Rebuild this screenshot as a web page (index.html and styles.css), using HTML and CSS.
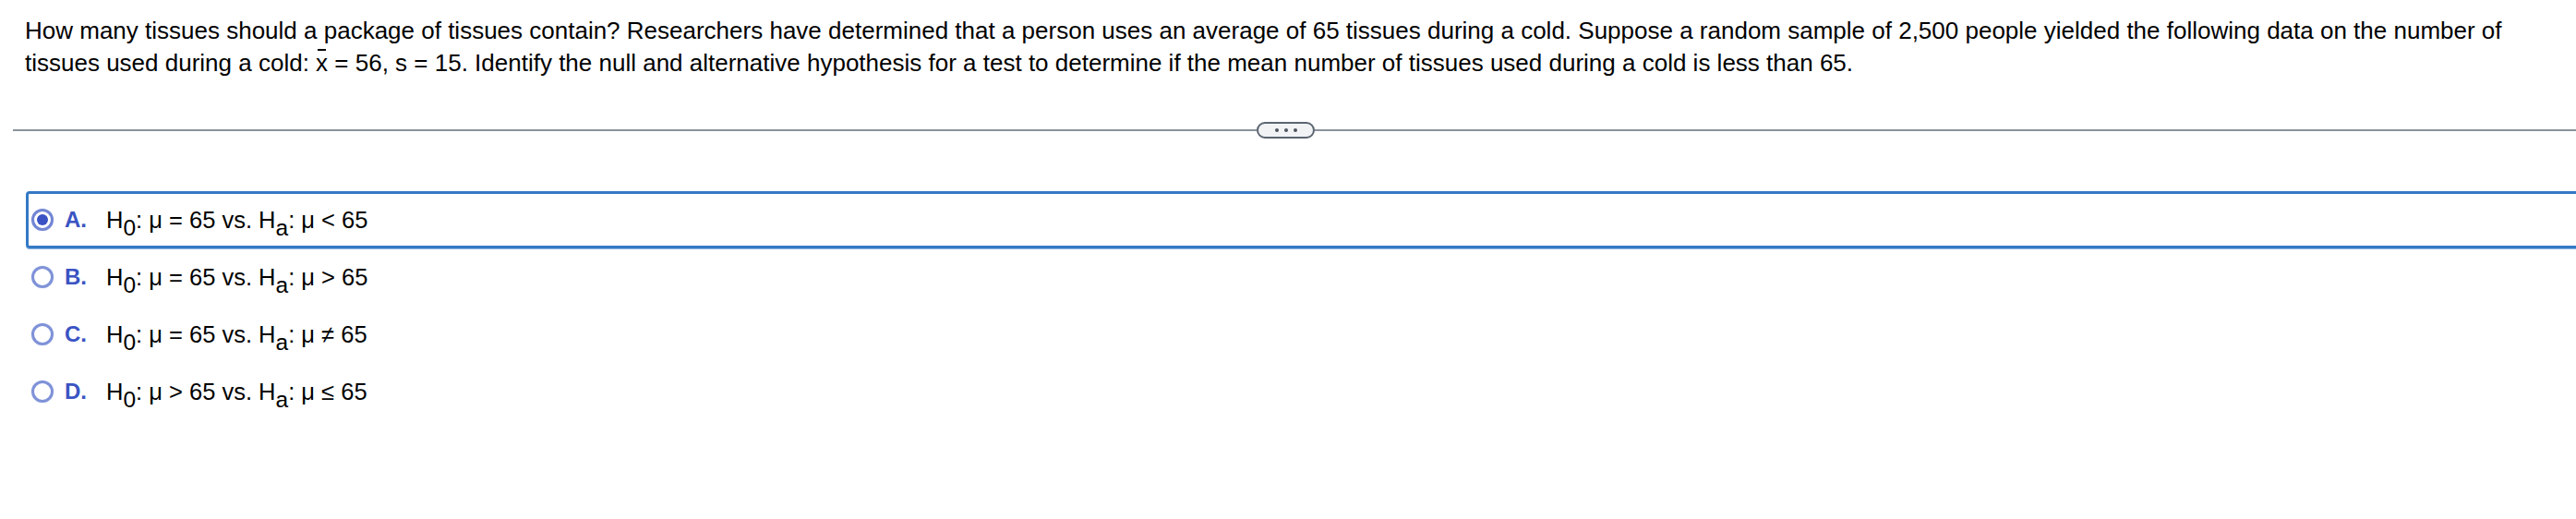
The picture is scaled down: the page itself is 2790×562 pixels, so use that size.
FILE: index.html
```html
<!DOCTYPE html>
<html>
<head>
<meta charset="utf-8">
<link rel="stylesheet" href="styles.css">
</head>
<body>
<div class="question">
<p class="q-text">How many tissues should a package of tissues contain? Researchers have determined that a person uses an average of 65 tissues during a cold. Suppose a random sample of 2,500 people yielded the following data on the number of tissues used during a cold: <span class="xbar">x</span> = 56, s = 15. Identify the null and alternative hypothesis for a test to determine if the mean number of tissues used during a cold is less than 65.</p>
</div>
<div class="divider">
  <div class="rule"></div>
  <button class="more"><span class="dot"></span><span class="dot"></span><span class="dot"></span></button>
  <div class="rule"></div>
</div>
<ul class="options">
  <li class="option selected">
    <span class="radio"><span class="radio-dot"></span></span>
    <span class="letter">A.</span>
    <span class="expr">H<sub>0</sub>: μ = 65 vs. H<sub>a</sub>: μ &lt; 65</span>
  </li>
  <li class="option">
    <span class="radio"></span>
    <span class="letter">B.</span>
    <span class="expr">H<sub>0</sub>: μ = 65 vs. H<sub>a</sub>: μ &gt; 65</span>
  </li>
  <li class="option">
    <span class="radio"></span>
    <span class="letter">C.</span>
    <span class="expr">H<sub>0</sub>: μ = 65 vs. H<sub>a</sub>: μ ≠ 65</span>
  </li>
  <li class="option">
    <span class="radio"></span>
    <span class="letter">D.</span>
    <span class="expr">H<sub>0</sub>: μ &gt; 65 vs. H<sub>a</sub>: μ ≤ 65</span>
  </li>
</ul>
</body>
</html>
```

FILE: styles.css
```css
html, body {
  margin: 0;
  padding: 0;
  background: #ffffff;
  overflow: hidden;
}

body {
  font-family: "Liberation Sans", Arial, sans-serif;
  color: #000000;
}

.question {
  padding: 16px 40px 0 27px;
}

.q-text {
  margin: 0;
  font-size: 26px;
  line-height: 34.5px;
}

.xbar {
  position: relative;
  display: inline-block;
}

.xbar::before {
  content: "";
  position: absolute;
  left: 2px;
  top: 2px;
  width: 9px;
  height: 2px;
  background: #000;
}

.divider {
  display: flex;
  align-items: center;
  margin: 47px 0 0 14px;
}

.rule {
  flex: 1;
  height: 2px;
  background: #8a929c;
}

.rule:first-child {
  flex: 0 0 1347px;
}

.more {
  display: flex;
  align-items: center;
  justify-content: center;
  gap: 6px;
  width: 63px;
  height: 18px;
  padding: 0;
  border: 2px solid #5b6570;
  border-radius: 9px;
  background: #f2f3f5;
}

.dot {
  width: 4px;
  height: 4px;
  border-radius: 50%;
  background: #4f5560;
}

.options {
  list-style: none;
  margin: 57px -20px 0 28px;
  padding: 0;
}

.option {
  display: flex;
  align-items: center;
  height: 62px;
  box-sizing: border-box;
  border: 3px solid transparent;
  border-radius: 4px;
  padding-left: 3px;
}

.option.selected {
  border-color: #3479c5;
  box-shadow: 0 1px 0 #8db5e2;
}

.radio {
  display: flex;
  align-items: center;
  justify-content: center;
  width: 24px;
  height: 24px;
  box-sizing: border-box;
  border: 3px solid #7f92d8;
  border-radius: 50%;
  box-shadow: 0 0 1px #a9b6e6;
  flex: 0 0 auto;
}

.selected .radio {
  border-color: #7386d4;
}

.radio-dot {
  width: 12px;
  height: 12px;
  border-radius: 50%;
  background: #3a52c4;
}

.letter {
  margin-left: 12px;
  width: 45px;
  font-size: 24px;
  font-weight: bold;
  color: #3b54c3;
}

.expr {
  font-size: 25.5px;
  white-space: nowrap;
}

.expr sub {
  font-size: 24.5px;
  vertical-align: -8px;
  line-height: 0;
}
```
